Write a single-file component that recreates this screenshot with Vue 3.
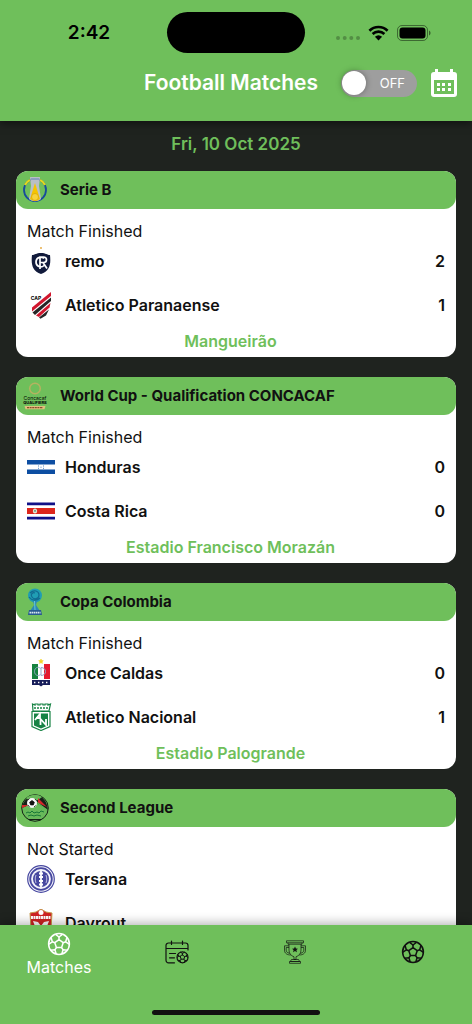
<template>
  <div class="app">
    <svg class="sprite" aria-hidden="true">
      <symbol id="ball" viewBox="0 0 24 24">
        <g fill="none" stroke="currentColor" stroke-width="1.5" stroke-linejoin="round">
          <circle cx="12" cy="12" r="10.4" />
          <path d="M12 7.600l4.200 3.100-1.600 4.900H9.400l-1.600-4.900z" />
          <path d="M12 7.600V5M16.200 10.700l2.500-.9M14.600 15.600l1.500 2.100M9.400 15.600l-1.500 2.100M7.800 10.700l-2.500-.9" />
          <path d="M8.600 2.300L12 5l3.400-2.700M20 5.300l-1.300 4.500 3.700 2.500M20.300 18.200l-4.200-.5-1.300 4.200M9.200 21.900l-1.300-4.200-4.200.5M1.600 12.300l3.700-2.500L4 5.300" />
        </g>
      </symbol>
      <symbol id="fixtures" viewBox="0 0 24 24">
        <g fill="none" stroke="currentColor" stroke-width="1.2" stroke-linecap="round">
          <path d="M9.500 22.800H3.500a2.500 2.500 0 0 1-2.500-2.500V5.500A2.500 2.500 0 0 1 3.500 3h17A2.500 2.500 0 0 1 23 5.500V10M1 8.500h22M6.500 1v3.500M17.500 1v3.500M4.500 13.500h6M4.500 17.800h5" />
          <circle cx="17.500" cy="17.300" r="5.500" />
          <path d="M17.500 15l2.200 1.600-.8 2.600h-2.800l-.8-2.600zM17.500 15v-1.500l-2-1.300M17.500 13.500l2-1.300M19.700 16.600l1.500-.5 1-1.600M21.200 16.100l1.600 1.300M18.900 19.200l1 1.400 1.800-.2M19.900 20.600l-.5 1.800M16.100 19.200l-1 1.400-1.800-.2M15.100 20.600l.5 1.800M15.300 16.600l-1.500-.5-1-1.600M13.800 16.100l-1.600 1.300" stroke-width="1" />
        </g>
      </symbol>
      <symbol id="trophy" viewBox="0 0 24 24">
        <g fill="none" stroke="currentColor" stroke-width=".7">
          <path d="M3.500.8h17v2h-17zM5 2.800v1.400h14V2.800M6 4.200v6c0 3.500 2.200 5.500 5 6.600v2.700h2v-2.700c2.800-1.100 5-3.100 5-6.600v-6" />
          <path d="M6 5.800H1.500v4.400c0 3 2.500 4.800 6.300 4.800M6 7.500H3.200v2.700c0 1.700 1.500 2.900 3.600 3M18 5.800h4.500v4.400c0 3-2.500 4.800-6.300 4.800M18 7.500h2.800v2.700c0 1.700-1.500 2.900-3.600 3" />
          <path d="M8.500 19.500h7l1.200 2H7.300zM6.500 21.500h11v1.800h-11z" />
        </g>
        <path d="M12 6.600l.9 1.900 2.100.2-1.600 1.400.5 2.100-1.900-1.100-1.900 1.100.5-2.100L9 8.700l2.100-.2z" fill="currentColor" />
      </symbol>

      <symbol id="serie-b" viewBox="0 0 28 28">
        <circle cx="14" cy="14" r="11" fill="none" stroke="#174a9c" stroke-width="1.800" />
        <path d="M4 9a11 11 0 0 1 5-5M19 4a11 11 0 0 1 5 5" fill="none" stroke="#e6d81c" stroke-width="2.200" />
        <path d="M9 1h10l-1 9 2 13c-3 3-9 3-12 0l2-13z" fill="#b9bfc5" />
        <path d="M14 7l5 16c-3 2.500-7 2.500-10 0z" fill="#f5c400" />
        <circle cx="14" cy="21" r="3.500" fill="#f7d33b" stroke="#d8a200" stroke-width=".7" />
        <path d="M10 3h8" stroke="#5f7fb8" stroke-width="1" />
      </symbol>
      <symbol id="concacaf" viewBox="0 0 28 28">
        <circle cx="14" cy="6.500" r="5.300" fill="none" stroke="#b5b260" stroke-width="1.500" />
        <path d="M3.500 24h21l-1 3.200h-19z" fill="#dfc17d" />
        <path d="M6 25.600h16" stroke="#8c4b2c" stroke-width="1.200" stroke-dasharray="2 .6" />
      </symbol>
      <symbol id="copa-colombia" viewBox="0 0 28 28">
        <circle cx="14" cy="7.500" r="7" fill="#209eb4" />
        <path d="M9 5c4-4 9-2 9 2s-5 5-7 2 1-5 3-4M8 9c3 4 8 4 11 1" fill="none" stroke="#126b91" stroke-width="1.200" />
        <path d="M12 13h4l-1 4 4 6H9l4-6z" fill="#2c88b5" />
        <path d="M13.500 13l.5 9" stroke="#65c9d6" />
        <path d="M8 22h12l1 5H7z" fill="#285a91" />
        <path d="M8.500 24.700h11" stroke="#d8e7ee" stroke-width="1.800" stroke-dasharray="1.500 .5" />
      </symbol>
      <symbol id="second-league" viewBox="0 0 28 28">
        <circle cx="14" cy="14" r="13.300" fill="#68b95a" stroke="#152016" stroke-width="1" />
        <path d="M1 14C6 12 9 10 12 7l15 9C26 4 18 1 14 1S2 5 1 14z" fill="#182019" />
        <path d="M5 4c5-4 12-4 16-1l-4 3-8 1z" fill="#68b95a" />
        <path d="M1 11l7 0-7 3M17 4l9 9-9-4z" fill="#d6282b" />
        <path d="M14 7l12 9M2 16c7-1 9-3 11-5" stroke="#62b957" stroke-width="1.200" fill="none" />
        <circle cx="11" cy="9" r="5" fill="#f8f8f8" />
        <path d="M11 6.500l2.300 1.700-.9 2.700H9.600l-.9-2.700zM7 6l1.500-1.400M14 5l1.200 1.500M7 11l1.500 2M13 13l1.700-1.500" fill="#111" stroke="#111" stroke-width=".8" />
        <path d="M5 19l2-1 2 1 2-2 2 2 3-1 2 1 2-2 3 1M7 22l3-1 3 1 3-1 4 1" stroke="#187737" stroke-width="1" fill="none" />
        <path d="M8 25.500h12" stroke="#152016" stroke-width="1" />
      </symbol>

      <symbol id="remo" viewBox="0 0 28 28">
        <circle cx="14" cy="1" r=".9" fill="#e5a437" />
        <path d="M5 8c3 0 4-2 9-2s6 2 9 2c1 9 0 16-9 19C5 24 4 17 5 8z" fill="#111a3b" />
        <path d="M17 11.500c-3-3-8-1-8 3.500s5 6.500 8 3.500M13 22V10h3.500c4 0 4 5.500 0 5.500H13M16 15.500l4 6" fill="none" stroke="#fff" stroke-width="1.700" />
      </symbol>
      <symbol id="paranaense" viewBox="0 0 28 28">
        <path d="M5 16.500L24 1v4L5 20.500z" fill="#d1162e" />
        <path d="M5.500 21.500L24 6.500V10L8 24z" fill="#252525" />
        <path d="M9 24.500L23.500 12l-1 4.500L12 26z" fill="#d1162e" />
        <path d="M12 26.500l10-8-3 6-5.500 3.200z" fill="#252525" />
      </symbol>
      <symbol id="honduras" viewBox="0 0 28 28">
        <path d="M0 7h28v14H0z" fill="#fff" />
        <path d="M0 7h28v4.500H0zM0 16.500h28V21H0z" fill="#0d4ea2" />
        <path d="M11.500 12.500v1M11.500 14.800v1M14 13.700v1M16.500 12.500v1M16.500 14.800v1" stroke="#5184c3" stroke-width="1" />
      </symbol>
      <symbol id="costa-rica" viewBox="0 0 28 28">
        <path d="M0 5.500h28v17H0z" fill="#fff" />
        <path d="M0 5.500h28v2.700H0zM0 19.800h28v2.700H0z" fill="#101087" />
        <path d="M0 11h28v6H0z" fill="#dd261c" />
        <ellipse cx="8" cy="14" rx="2.200" ry="2.500" fill="#e5e8d7" />
        <path d="M6.700 14.500l1.300-2 1.300 2z" fill="#438268" />
      </symbol>
      <symbol id="once-caldas" viewBox="0 0 28 28">
        <path d="M14 0l.7 1.500 1.600.2-1.200 1.100.3 1.600-1.400-.8-1.400.8.3-1.600-1.200-1.100 1.600-.2z" fill="#f4d326" stroke="#f4d326" stroke-width=".6" />
        <path d="M5 5h6v15H5z" fill="#16833f" />
        <path d="M11 5h6v15h-6z" fill="#fff" />
        <path d="M17 5h6v15h-6z" fill="#e51a2e" />
        <path d="M13.500 9.500c-3-3-6 0-6 3s3 5.500 6 3M14 8.500v8c6 0 6-8 0-8z" fill="none" stroke="#97a8c8" stroke-width="1" />
        <path d="M5 21h18v5h-7l-2 1.500-2-1.500H5z" fill="#171d59" />
        <path d="M7 23.500h14" stroke="#fff" stroke-width="1.300" stroke-dasharray="1.400 2.600" />
      </symbol>
      <symbol id="nacional" viewBox="0 0 28 28">
        <g fill="#fff" stroke="#168344">
          <path d="M5.500 1l2.500 1V1h3v1h2V1h3v1h2V1h3v1l2.500-1L22 8H6z" stroke-width="1.200" />
          <path d="M7 5h14" stroke-width="1.400" stroke-dasharray="2 1" />
          <path d="M5 8.500h18v15l-9 4-9-4z" stroke-width="1.200" />
        </g>
        <path d="M7 10.500h14v12l-7 3-7-3z" fill="#168344" />
        <path d="M8 17l5-6v5M9 15h4M13.500 22v-6l5.500 6v-6" fill="none" stroke="#fff" stroke-width="1.800" />
      </symbol>
      <symbol id="tersana" viewBox="0 0 28 28">
        <circle cx="14" cy="14" r="13.300" fill="#f4f4fb" stroke="#4748a0" stroke-width="1.200" />
        <circle cx="14" cy="14" r="10.800" fill="none" stroke="#4748a0" stroke-width="1.800" />
        <circle cx="14" cy="14" r="8" fill="#4748a0" />
        <path d="M14 6v16M12 8.500h4M12 12h4M12 16h4M12 19.500h4" stroke="#fff" stroke-width="1.800" />
        <path d="M9 10c-1 3-1 5 0 8M19 10c1 3 1 5 0 8" fill="none" stroke="#d9d9f0" stroke-width=".8" />
      </symbol>
      <symbol id="dayrout" viewBox="0 0 28 28">
        <path d="M3 4l6-1 5-3 5 3 6 1-1 16-10 7-10-7z" fill="#cf2222" stroke="#c59a4c" stroke-width="1" />
        <circle cx="14" cy="3.500" r="2.500" fill="#fff" />
        <path d="M4 8.500h20" stroke="#fff" stroke-width="3" stroke-dasharray="2 .5" />
        <path d="M6 12l5 1 3 4 3-4 5-1-3 8H9z" fill="#fff" />
      </symbol>
    </svg>

    <header class="top-bar">
      <div class="status-bar">
        <span class="clock">2:42</span>
        <span class="island"></span>
        <span class="indicators">
          <svg class="signal" viewBox="0 0 24 4"><path d="M2 2h.01M8.700 2h.01M15.300 2h.01M22 2h.01" /></svg>
          <svg class="wifi" viewBox="0 0 21 16">
            <path d="M1.400 5.700a13 13 0 0 1 18.200 0M4.600 9a8.500 8.500 0 0 1 11.800 0" fill="none" stroke="#000" stroke-width="2.600" />
            <path d="M6.900 11.700a5.500 5.500 0 0 1 7.200 0l-3.600 3.800z" />
          </svg>
          <svg class="battery" viewBox="0 0 34 16">
            <rect x=".5" y=".5" width="30" height="15" rx="4.500" fill="none" stroke="#000" stroke-opacity=".45" />
            <rect x="2.500" y="2.500" width="26" height="11" rx="3" />
            <path d="M32 5.500c2 .7 2 4.300 0 5z" fill-opacity=".5" />
          </svg>
        </span>
      </div>
      <div class="title-row">
        <h1>Football Matches</h1>
        <label class="switch">
          <input v-model="liveOnly" type="checkbox" aria-label="Live matches" />
          <span class="knob"></span>
          <span class="switch-text">{{ liveOnly ? 'ON' : 'OFF' }}</span>
        </label>
        <button class="calendar" aria-label="Pick a date">
          <svg viewBox="0 0 26 28">
            <path fill="#fff" fill-rule="evenodd" d="M4 0h3v3h12V0h3v3h1a3 3 0 0 1 3 3v19a3 3 0 0 1-3 3H3a3 3 0 0 1-3-3V6a3 3 0 0 1 3-3h1zM3 11v14h20V11zM6 14h3v3H6zm5 0h3v3h-3zm6 0h3v3h-3zM6 19h3v3H6zm5 0h3v3h-3zm6 0h3v3h-3z" />
          </svg>
        </button>
      </div>
    </header>

    <main class="content">
      <p class="date">Fri, 10 Oct 2025</p>
      <article v-for="match in matches" :key="match.league" class="card">
        <h2 class="league">
          <svg class="crest" viewBox="0 0 28 28">
            <use :href="'#' + match.logo" />
            <template v-if="match.logo === 'concacaf'">
              <text class="logo-name" x="14" y="18">Concacaf</text>
              <text class="logo-event" x="14" y="22">QUALIFIERS</text>
            </template>
          </svg>
          {{ match.league }}
        </h2>
        <div class="card-body">
          <p class="status">{{ match.status }}</p>
          <div v-for="team in match.teams" :key="team.name" class="team">
            <svg class="crest" viewBox="0 0 28 28">
              <use :href="'#' + team.crest" />
              <text v-if="team.crest === 'paranaense'" class="crest-text" x="9" y="9">CAP</text>
            </svg>
            <span class="team-name">{{ team.name }}</span>
            <span class="score">{{ team.score }}</span>
          </div>
          <p class="venue">{{ match.venue }}</p>
        </div>
      </article>
    </main>

    <nav class="bottom-nav">
      <div class="tabs">
        <button
          v-for="tab in tabs"
          :key="tab.label"
          class="tab"
          :class="{ active: activeTab === tab.label }"
          :aria-label="tab.label"
          @click="activeTab = tab.label"
        >
          <svg class="tab-icon"><use :href="'#' + tab.icon" /></svg>
          <span v-if="activeTab === tab.label">{{ tab.label }}</span>
        </button>
      </div>
      <span class="home-indicator"></span>
    </nav>
  </div>
</template>

<script setup>
import { ref } from 'vue';

const liveOnly = ref(false);
const activeTab = ref('Matches');

const tabs = [
  { label: 'Matches', icon: 'ball' },
  { label: 'Fixtures', icon: 'fixtures' },
  { label: 'Leagues', icon: 'trophy' },
  { label: 'Teams', icon: 'ball' }
];

const matches = [
  {
    league: 'Serie B',
    logo: 'serie-b',
    status: 'Match Finished',
    venue: 'Mangueirão',
    teams: [
      { name: 'remo', crest: 'remo', score: 2 },
      { name: 'Atletico Paranaense', crest: 'paranaense', score: 1 }
    ]
  },
  {
    league: 'World Cup - Qualification CONCACAF',
    logo: 'concacaf',
    status: 'Match Finished',
    venue: 'Estadio Francisco Morazán',
    teams: [
      { name: 'Honduras', crest: 'honduras', score: 0 },
      { name: 'Costa Rica', crest: 'costa-rica', score: 0 }
    ]
  },
  {
    league: 'Copa Colombia',
    logo: 'copa-colombia',
    status: 'Match Finished',
    venue: 'Estadio Palogrande',
    teams: [
      { name: 'Once Caldas', crest: 'once-caldas', score: 0 },
      { name: 'Atletico Nacional', crest: 'nacional', score: 1 }
    ]
  },
  {
    league: 'Second League',
    logo: 'second-league',
    status: 'Not Started',
    venue: '',
    teams: [
      { name: 'Tersana', crest: 'tersana', score: '' },
      { name: 'Dayrout', crest: 'dayrout', score: '' }
    ]
  }
];
</script>

<style>
body {
  margin: 0;
  background: #1f231f;
}
</style>

<style scoped>
.app {
  display: flex;
  flex-direction: column;
  height: 100vh;
  font-family: Inter, "Liberation Sans", sans-serif;
  font-size: 16px;
  line-height: 22px;
  color: #111;
}

.sprite {
  position: absolute;
  width: 0;
  height: 0;
}

h1, h2, p {
  margin: 0;
}

button {
  padding: 0;
  border: none;
  background: none;
  font: inherit;
  color: inherit;
  cursor: pointer;
}

.top-bar {
  z-index: 1;
  flex-shrink: 0;
  padding: 12px 15px 24px;
  background: #6fbf5b;
  box-shadow: 0 2px 8px rgba(0, 0, 0, 0.5);
}

.status-bar {
  display: grid;
  grid-template-columns: 1fr 138px 1fr;
  align-items: center;
}

.clock {
  padding-right: 4px;
  text-align: center;
  font-size: 19px;
  font-weight: 600;
  color: #000;
}

.island {
  height: 41px;
  border-radius: 21px;
  background: #000;
}

.indicators {
  display: flex;
  align-items: center;
  justify-content: flex-end;
  gap: 8px;
  padding-right: 26px;
}

.signal {
  width: 24px;
  height: 4px;
  margin-top: 10px;
  stroke: rgba(0, 0, 0, 0.25);
  stroke-width: 4;
  stroke-linecap: round;
}

.wifi {
  width: 21px;
  height: 16px;
}

.battery {
  width: 34px;
  height: 16px;
}

.title-row {
  display: flex;
  align-items: center;
  justify-content: flex-end;
  margin-top: 16px;
}

h1 {
  font-size: 21px;
  font-weight: 600;
  color: #fff;
}

.switch {
  display: flex;
  align-items: center;
  justify-content: space-between;
  box-sizing: border-box;
  width: 76px;
  height: 27px;
  margin: 0 14px 0 23px;
  padding: 0 12px 0 1px;
  border-radius: 14px;
  background: #9e9e9e;
  cursor: pointer;
}

.switch input {
  position: absolute;
  opacity: 0;
}

.knob {
  width: 24px;
  height: 24px;
  border-radius: 50%;
  background: #fff;
  box-shadow: 0 0 6px rgba(0, 0, 0, 0.35);
}

.switch-text {
  font-size: 13px;
  color: #fff;
}

.calendar {
  width: 26px;
  height: 28px;
}

.calendar svg {
  display: block;
}

.content {
  flex: 1;
  min-height: 0;
  overflow-y: auto;
  scrollbar-width: none;
  padding: 12px 16px 0;
}

.date {
  margin-bottom: 16px;
  text-align: center;
  font-size: 17px;
  font-weight: 600;
  color: #6fbf5b;
}

.card {
  margin-bottom: 20px;
  border-radius: 12px;
  background: #fff;
}

.crest {
  flex-shrink: 0;
  width: 28px;
  height: 28px;
  text-anchor: middle;
}

.logo-name {
  font-size: 5px;
  font-weight: 400;
}

.logo-event {
  font-size: 4px;
  font-weight: 700;
}

.crest-text {
  font-size: 5px;
  font-weight: 700;
}

.league {
  display: flex;
  align-items: center;
  gap: 11px;
  height: 38px;
  padding: 0 5px;
  border-radius: 12px;
  background: #6fbf5b;
  font-size: 15px;
  font-weight: 700;
}

.card-body {
  padding: 11px 11px 5px;
}

.team {
  display: flex;
  align-items: center;
  gap: 10px;
  height: 38px;
  margin-bottom: 6px;
  font-weight: 600;
}

.team-name {
  flex: 1;
}

.venue {
  min-height: 22px;
  padding-right: 11px;
  text-align: center;
  font-weight: 600;
  color: #6fbf5b;
}

.bottom-nav {
  z-index: 1;
  display: flex;
  flex-direction: column;
  flex-shrink: 0;
  align-items: center;
  justify-content: space-between;
  box-sizing: border-box;
  height: 99px;
  padding-bottom: 9px;
  background: #6fbf5b;
  box-shadow: 0 -2px 10px rgba(0, 0, 0, 0.3);
}

.tabs {
  display: flex;
  width: 100%;
  height: 54px;
}

.tab {
  display: flex;
  flex: 1;
  flex-direction: column;
  align-items: center;
  justify-content: center;
}

.tab.active {
  padding-top: 6px;
  color: #fff;
}

.tab-icon {
  width: 24px;
  height: 24px;
}

.home-indicator {
  width: 168px;
  height: 5px;
  border-radius: 3px;
  background: #111;
}
</style>
